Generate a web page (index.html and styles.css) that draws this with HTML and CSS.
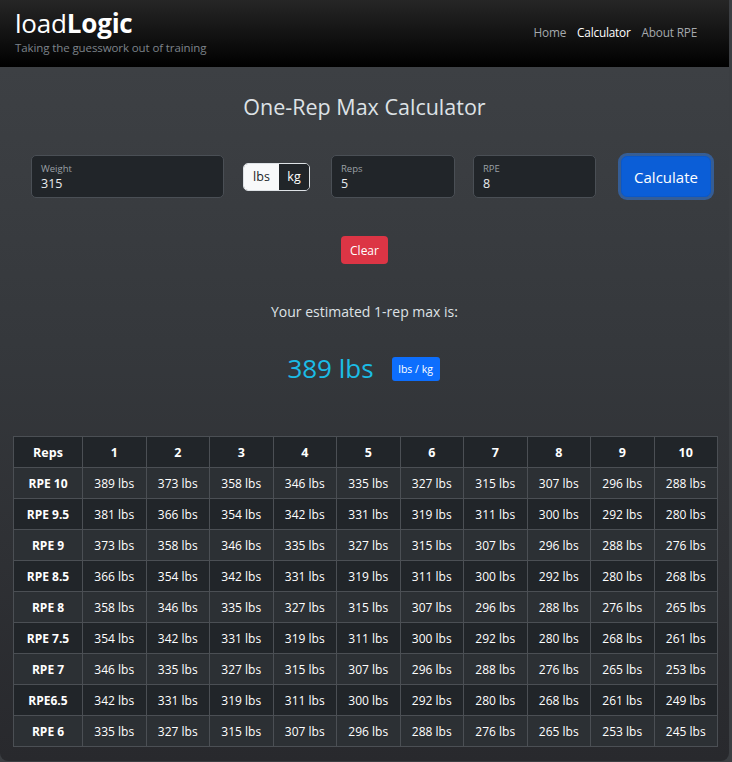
FILE: index.html
```html
<!DOCTYPE html>
<html>
<head>
<meta charset="utf-8">
<link rel="stylesheet" href="styles.css">
</head>
<body>
<div class="page">
  <header class="topbar">
    <div class="brand">
      <div class="logo">load<b>Logic</b></div>
      <div class="tagline">Taking the guesswork out of training</div>
    </div>
    <nav class="nav">
      <a>Home</a>
      <a class="active">Calculator</a>
      <a>About RPE</a>
    </nav>
  </header>

  <main class="main">
    <h1 class="title">One-Rep Max Calculator</h1>

    <div class="form-row">
      <div class="field w-weight">
        <span class="flabel">Weight</span>
        <span class="fvalue">315</span>
      </div>
      <div class="toggle">
        <span class="tg on">lbs</span>
        <span class="tg off">kg</span>
      </div>
      <div class="field w-reps">
        <span class="flabel">Reps</span>
        <span class="fvalue">5</span>
      </div>
      <div class="field w-rpe">
        <span class="flabel">RPE</span>
        <span class="fvalue">8</span>
      </div>
      <button class="btn-calc">Calculate</button>
    </div>

    <div class="clear-wrap"><button class="btn-clear">Clear</button></div>

    <p class="result-label">Your estimated 1-rep max is:</p>
    <div class="result">
      <span class="result-value">389 lbs</span>
      <button class="btn-unit">lbs / kg</button>
    </div>

    <table class="rpe-table">
      <thead>
        <tr><th>Reps</th><th>1</th><th>2</th><th>3</th><th>4</th><th>5</th><th>6</th><th>7</th><th>8</th><th>9</th><th>10</th></tr>
      </thead>
      <tbody>
        <tr><th>RPE 10</th><td>389 lbs</td><td>373 lbs</td><td>358 lbs</td><td>346 lbs</td><td>335 lbs</td><td>327 lbs</td><td>315 lbs</td><td>307 lbs</td><td>296 lbs</td><td>288 lbs</td></tr>
        <tr><th>RPE 9.5</th><td>381 lbs</td><td>366 lbs</td><td>354 lbs</td><td>342 lbs</td><td>331 lbs</td><td>319 lbs</td><td>311 lbs</td><td>300 lbs</td><td>292 lbs</td><td>280 lbs</td></tr>
        <tr><th>RPE 9</th><td>373 lbs</td><td>358 lbs</td><td>346 lbs</td><td>335 lbs</td><td>327 lbs</td><td>315 lbs</td><td>307 lbs</td><td>296 lbs</td><td>288 lbs</td><td>276 lbs</td></tr>
        <tr><th>RPE 8.5</th><td>366 lbs</td><td>354 lbs</td><td>342 lbs</td><td>331 lbs</td><td>319 lbs</td><td>311 lbs</td><td>300 lbs</td><td>292 lbs</td><td>280 lbs</td><td>268 lbs</td></tr>
        <tr><th>RPE 8</th><td>358 lbs</td><td>346 lbs</td><td>335 lbs</td><td>327 lbs</td><td>315 lbs</td><td>307 lbs</td><td>296 lbs</td><td>288 lbs</td><td>276 lbs</td><td>265 lbs</td></tr>
        <tr><th>RPE 7.5</th><td>354 lbs</td><td>342 lbs</td><td>331 lbs</td><td>319 lbs</td><td>311 lbs</td><td>300 lbs</td><td>292 lbs</td><td>280 lbs</td><td>268 lbs</td><td>261 lbs</td></tr>
        <tr><th>RPE 7</th><td>346 lbs</td><td>335 lbs</td><td>327 lbs</td><td>315 lbs</td><td>307 lbs</td><td>296 lbs</td><td>288 lbs</td><td>276 lbs</td><td>265 lbs</td><td>253 lbs</td></tr>
        <tr><th>RPE6.5</th><td>342 lbs</td><td>331 lbs</td><td>319 lbs</td><td>311 lbs</td><td>300 lbs</td><td>292 lbs</td><td>280 lbs</td><td>268 lbs</td><td>261 lbs</td><td>249 lbs</td></tr>
        <tr><th>RPE 6</th><td>335 lbs</td><td>327 lbs</td><td>315 lbs</td><td>307 lbs</td><td>296 lbs</td><td>288 lbs</td><td>276 lbs</td><td>265 lbs</td><td>253 lbs</td><td>245 lbs</td></tr>
      </tbody>
    </table>
  </main>
</div>
</body>
</html>
```

FILE: styles.css
```css
* { box-sizing: border-box; }

html, body {
  margin: 0;
  padding: 0;
  height: 100%;
}

body {
  background: #3b3e42;
  font-family: "Open Sans", "Liberation Sans", sans-serif;
  color: #dee2e6;
}

.page {
  width: 729px;
  height: 761px;
  border-radius: 0 0 8px 8px;
  background: linear-gradient(to bottom, #3f4246 0%, #35383c 45%, #28292d 100%);
  overflow: hidden;
}

.topbar {
  height: 67px;
  background: linear-gradient(to bottom, #262626 0%, #000 100%);
  display: flex;
  justify-content: space-between;
  align-items: flex-start;
  padding: 0 0 0 15px;
}

.brand { padding-top: 8px; }

.logo {
  font-size: 26px;
  line-height: 31px;
  color: #fff;
  font-weight: 400;
  letter-spacing: -0.2px;
}
.logo b { font-weight: 700; }

.tagline {
  margin-top: 1px;
  font-size: 11.5px;
  line-height: 16px;
  color: #7d838a;
  letter-spacing: -0.1px;
}

.nav {
  display: flex;
  gap: 11px;
  padding-top: 24px;
  padding-right: 32px;
  font-size: 11.8px;
  letter-spacing: -0.2px;
}
.nav a { color: #a5a9ad; }
.nav a.active { color: #fff; }

.main {
  padding: 0 13px;
}

.title {
  margin: 26px 0 0;
  text-align: center;
  font-size: 21.5px;
  font-weight: 400;
  line-height: 28px;
  color: #dee2e6;
}

.form-row {
  display: flex;
  align-items: center;
  margin-top: 34px;
  padding-left: 18px;
  height: 43px;
}

.field {
  height: 43px;
  background: #212529;
  border: 1px solid #4a4f55;
  border-radius: 5px;
  padding: 6px 9px 0;
  display: flex;
  flex-direction: column;
}
.w-weight { width: 193px; }
.w-reps { width: 124px; margin-left: 21px; }
.w-rpe { width: 123px; margin-left: 18px; }

.flabel {
  font-size: 9.5px;
  line-height: 14px;
  color: #9aa0a6;
}
.fvalue {
  font-size: 12.5px;
  line-height: 16px;
  color: #e9ecef;
}

.toggle {
  display: flex;
  width: 67px;
  height: 28px;
  margin-left: 19px;
  border: 1px solid #dee2e6;
  border-radius: 5px;
  overflow: hidden;
}
.tg {
  display: flex;
  align-items: center;
  justify-content: center;
  font-size: 12.5px;
}
.tg.on { width: 35px; background: #f8f9fa; color: #212529; }
.tg.off { flex: 1; background: #212529; color: #fff; }

.btn-calc {
  margin-left: 25px;
  width: 90px;
  height: 41px;
  background: #0b5ed7;
  border: 1px solid #0a58ca;
  border-radius: 6px;
  color: #fff;
  font-family: inherit;
  font-size: 15px;
  box-shadow: 0 0 0 3px rgba(49, 132, 253, 0.45);
}

.clear-wrap {
  display: flex;
  justify-content: center;
  margin-top: 38px;
}
.btn-clear {
  width: 47px;
  height: 28px;
  background: #dc3545;
  border: 0;
  border-radius: 4px;
  color: #fff;
  font-family: inherit;
  font-size: 12px;
  padding: 0;
}

.result-label {
  margin: 38px 0 0;
  text-align: center;
  font-size: 14px;
  line-height: 20px;
  color: #dee2e6;
}

.result {
  display: flex;
  justify-content: center;
  align-items: center;
  margin-top: 30px;
  gap: 18px;
  padding-right: 2px;
}
.result-value {
  font-size: 26px;
  line-height: 32px;
  color: #1bbce6;
}
.btn-unit {
  width: 48px;
  height: 24px;
  background: #0d6efd;
  border: 0;
  border-radius: 3px;
  color: #fff;
  font-family: inherit;
  font-size: 10.5px;
  padding: 0;
  margin-top: 1px;
}

.rpe-table {
  margin-top: 52px;
  width: 705px;
  border-collapse: collapse;
  table-layout: fixed;
  font-size: 12px;
  color: #fff;
}
.rpe-table th,
.rpe-table td {
  border: 1px solid #4b4f54;
  height: 31px;
  padding: 0;
  text-align: center;
  background: #212529;
}
.rpe-table thead th { font-size: 12.5px; }
.rpe-table th:first-child { width: 69px; }
.rpe-table tbody tr:nth-child(odd) th,
.rpe-table tbody tr:nth-child(odd) td { background: #2c3034; }
.rpe-table th { font-weight: 700; }
```
